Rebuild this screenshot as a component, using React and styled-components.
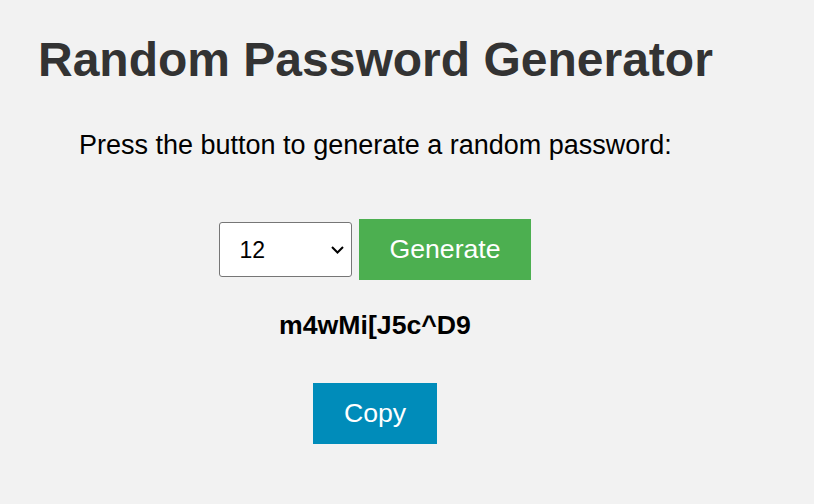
import styled, { createGlobalStyle } from "styled-components";

const GlobalStyle = createGlobalStyle`
  html, body {
    margin: 0;
    padding: 0;
    background: #f2f2f2;
    font-family: "Liberation Sans", Arial, sans-serif;
  }
`;

const Page = styled.div`
  width: 750px;
  padding-top: 32px;
`;

const Title = styled.h1`
  margin: 0 0 0 38px;
  font-size: 48px;
  font-weight: bold;
  line-height: normal;
  color: #333;
`;

const Intro = styled.p`
  margin: 43px 0 0 79px;
  font-size: 27px;
  line-height: normal;
  color: #000;
`;

const Controls = styled.div`
  display: flex;
  flex-direction: column;
  align-items: center;
`;

const Row = styled.div`
  display: flex;
  align-items: center;
  gap: 7px;
  margin-top: 58px;
`;

const SelectWrap = styled.div`
  position: relative;
  width: 133px;
  height: 55px;
`;

const LengthSelect = styled.select`
  appearance: none;
  -webkit-appearance: none;
  box-sizing: border-box;
  width: 100%;
  height: 100%;
  padding: 0 0 0 19px;
  border: 1px solid #767676;
  border-radius: 3px;
  background: #fff;
  font-family: "Liberation Sans", Arial, sans-serif;
  font-size: 23px;
  color: #000;
  outline: none;
`;

const Chevron = styled.svg`
  position: absolute;
  right: 8px;
  top: 24px;
  pointer-events: none;
`;

const Button = styled.button`
  border: none;
  margin: 0;
  padding: 15px ${(props) => props.padx || 30}px;
  font-family: "Liberation Sans", Arial, sans-serif;
  font-size: 26.67px;
  line-height: normal;
  color: #fff;
  background: ${(props) => props.bg};
  cursor: pointer;
`;

const Password = styled.div`
  margin-top: 30px;
  font-size: 26.67px;
  font-weight: bold;
  line-height: normal;
  color: #000;
`;

const CopyArea = styled.div`
  margin-top: 42px;
`;

export default function App() {
  return (
    <>
      <GlobalStyle />
      <Page>
        <Title>Random Password Generator</Title>
        <Intro>Press the button to generate a random password:</Intro>
        <Controls>
          <Row>
            <SelectWrap>
              <LengthSelect defaultValue="12">
                <option value="8">8</option>
                <option value="12">12</option>
                <option value="16">16</option>
                <option value="20">20</option>
              </LengthSelect>
              <Chevron width="13" height="8" viewBox="0 0 13 8">
                <path d="M1 1 L6.5 6.5 L12 1" fill="none" stroke="#000" strokeWidth="2" />
              </Chevron>
            </SelectWrap>
            <Button bg="#4caf50">Generate</Button>
          </Row>
          <Password>m4wMi[J5c^D9</Password>
          <CopyArea>
            <Button bg="#008cba" padx={31}>Copy</Button>
          </CopyArea>
        </Controls>
      </Page>
    </>
  );
}
